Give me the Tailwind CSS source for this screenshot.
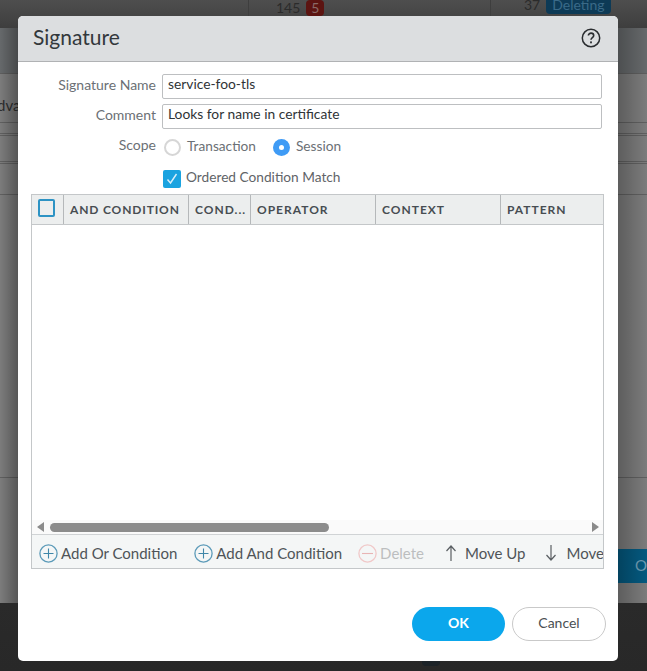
<!DOCTYPE html>
<html lang="en">
<head>
  <meta charset="UTF-8" />
  <title>Signature</title>
  <script src="https://cdn.jsdelivr.net/npm/@tailwindcss/browser@4"></script>
</head>
<body class="relative w-[647px] h-[671px] overflow-hidden bg-gradient-to-b from-[#3c3c3c] to-[#282828] font-['Lato','Open_Sans',sans-serif]">

  <!-- dimmed page behind the dialog -->
  <div class="h-[28px] bg-gradient-to-b from-[#4e4e4e] to-[#3e3e3e] flex items-start text-[14px] text-[#2b2b2b]">
    <div class="ml-[248px] w-[243px] h-[16px] border-x border-[#3e3e3e] flex justify-start pl-[27px] gap-[6px]">
      <span class="-mt-[3px]">145</span>
      <span class="h-[16px] w-[18px] bg-[#5c1411] rounded-sm text-center text-[#8a6a66] leading-[15px]">5</span>
    </div>
    <div class="ml-[33px] -mt-[6px] flex gap-[6px]">
      <span>37</span>
      <span class="h-[20px] px-[6px] bg-[#0d3a56] rounded-sm text-[#3a6a88]">Deleting</span>
    </div>
  </div>
  <div class="h-[575px] bg-[#7c7c7c] relative">
    <div class="absolute left-0 right-0 top-0 h-[45px] bg-[#66696b]"></div>
    <div class="absolute left-0 top-[66px] w-[18px] text-[15px] text-[#2e2e2e] overflow-hidden whitespace-nowrap"><span class="-ml-[3px] block">dvanced</span></div>
    <div class="absolute left-0 right-0 top-[45px] border-t border-[#5e5e5e]"></div>
    <div class="absolute left-0 right-0 top-[94px] border-t border-[#606060]"></div>
    <div class="absolute left-0 right-0 top-[105px] border-t-3 border-double border-[#606060]"></div>
    <div class="absolute left-0 right-0 top-[133px] border-t-3 border-double border-[#606060]"></div>
    <div class="absolute left-0 right-0 top-[166px] border-t border-[#606060]"></div>
    <div class="absolute left-0 right-0 top-[449px] border-t border-[#606060]"></div>
    <div class="absolute right-0 top-[521px] w-[29px] h-[34px] bg-[#04597f] text-[15px] text-[#6f9db5] pl-[17px] leading-[33px] overflow-hidden">O</div>
  </div>

  <!-- shadows either side of the dialog -->
  <div class="absolute left-0 top-[28px] w-[18px] h-[575px] bg-gradient-to-r from-black/0 to-black/30"></div>
  <div class="absolute left-[618px] top-[28px] w-[29px] h-[575px] bg-gradient-to-l from-black/0 to-black/25"></div>
  <div class="absolute left-[422px] top-[660px] w-[18px] h-[6px] bg-[#1c2328] rounded-b-sm"></div>

  <!-- dialog -->
  <div class="absolute left-[18px] top-[16px] w-[600px] h-[645px] bg-white rounded-[5px] flex flex-col">
    <div class="h-[46px] shrink-0 bg-[#dcdee0] border-b border-[#b0b2b4] rounded-t-[5px] flex items-center justify-between pl-[15px] pr-[17px]">
      <span class="text-[21px] text-[#33383c] leading-none -mt-[5px]">Signature</span>
      <svg width="20" height="20" viewBox="0 0 20 20" class="-mt-[1px]">
        <circle cx="10" cy="10" r="8.7" fill="none" stroke="#2a2d30" stroke-width="1.5"/>
        <path d="M7.4 7.6c0-1.500 1.200-2.500 2.700-2.500s2.600 1 2.600 2.300c0 2.200-2.700 2.200-2.700 4.400" fill="none" stroke="#2a2d30" stroke-width="1.600"/>
        <rect x="9.100" y="13.400" width="1.800" height="1.900" fill="#2a2d30"/>
      </svg>
    </div>

    <div class="pl-[13px] pr-[14px] flex flex-col">
      <div class="flex items-center mt-[12px] gap-[6px]">
        <label class="w-[125px] text-right text-[14px] text-[#6b7075] -mt-[5px]">Signature Name</label>
        <div class="w-[440px] h-[25px] border border-[#bdbfc1] rounded-[2px] px-[5px] text-[13.8px] leading-[18px] text-[#2f3336]">service-foo-tls</div>
      </div>
      <div class="flex items-center mt-[5px] gap-[6px]">
        <label class="w-[125px] text-right text-[14px] text-[#6b7075] -mt-[5px]">Comment</label>
        <div class="w-[440px] h-[25px] border border-[#bdbfc1] rounded-[2px] px-[5px] text-[13.8px] leading-[18px] text-[#2f3336]">Looks for name in certificate</div>
      </div>
      <div class="flex items-center mt-[5px] h-[26px] gap-[7px]">
        <label class="w-[125px] text-right text-[14px] text-[#6b7075] -mt-[5px]">Scope</label>
        <span class="ml-[1px] w-[17px] h-[17px] rounded-full border-2 border-[#d6d6d6] bg-white"></span>
        <span class="text-[13.7px] text-[#6b7075] -ml-[1px] -mt-[2px]">Transaction</span>
        <span class="ml-[10px] w-[17px] h-[17px] rounded-full bg-[#3f9bf5] flex items-center justify-center"><span class="w-[5px] h-[5px] rounded-full bg-white"></span></span>
        <span class="text-[13.7px] text-[#6b7075] -ml-[1px] -mt-[2px]">Session</span>
      </div>
      <div class="flex items-center mt-[5px] h-[26px] pl-[132px] gap-[5px]">
        <span class="w-[18px] h-[18px] rounded-[2px] bg-[#1aa3e0] flex items-center justify-center mt-[2px]">
          <svg width="14" height="14" viewBox="0 0 14 14"><path d="M2.500 7.500l3 3.500 6-9" fill="none" stroke="#d8effa" stroke-width="1.400"/></svg>
        </span>
        <span class="text-[13.7px] text-[#5f6468] -mt-[2px]">Ordered Condition Match</span>
      </div>

      <!-- conditions table -->
      <div class="mt-[3px] w-[573px] h-[375px] border border-[#c4c7c9] flex flex-col">
        <div class="h-[30px] shrink-0 bg-[#eceeee] border-b border-[#c4c7c9] flex text-[12px] font-bold tracking-[1px] text-[#474d52]">
          <div class="w-[32px] border-r border-[#b5b8ba] flex items-center justify-center pr-[2px]"><span class="w-[17px] h-[18px] border-2 border-[#2d93c4] rounded-[2px] -mt-[4px]"></span></div>
          <div class="w-[125px] border-r border-[#b5b8ba] flex items-center pl-[6px] tracking-[0.85px]">AND CONDITION</div>
          <div class="w-[62px] border-r border-[#b5b8ba] flex items-center pl-[6px]">COND...</div>
          <div class="w-[125px] border-r border-[#b5b8ba] flex items-center pl-[6px]">OPERATOR</div>
          <div class="w-[125px] border-r border-[#b5b8ba] flex items-center pl-[6px]">CONTEXT</div>
          <div class="flex-1 flex items-center pl-[6px]">PATTERN</div>
        </div>
        <div class="flex-1"></div>
        <div class="h-[15px] shrink-0 bg-[#fafafa] border-b border-[#d0d3d5] flex items-center relative">
          <span class="absolute left-[5px] top-[2px] border-y-[5px] border-y-transparent border-r-[7px] border-r-[#8a8a8a]"></span>
          <span class="absolute left-[18px] top-[3px] w-[279px] h-[9px] rounded-full bg-[#8c8c8c]"></span>
          <span class="absolute right-[4px] top-[2px] border-y-[5px] border-y-transparent border-l-[7px] border-l-[#8a8a8a]"></span>
        </div>
        <div class="h-[33px] shrink-0 bg-[#f4f6f6] flex items-center overflow-hidden whitespace-nowrap text-[15px] text-[#4f5458] pl-[7px] pt-[3px]">
          <svg width="19" height="19" viewBox="0 0 19 19" class="shrink-0"><circle cx="9.500" cy="9.500" r="8.600" fill="none" stroke="#5b9ab8" stroke-width="1.300"/><path d="M9.500 4.500v10M4.500 9.500h10" stroke="#3f86a8" stroke-width="1.100"/></svg>
          <span class="ml-[3px]">Add Or Condition</span>
          <svg width="19" height="19" viewBox="0 0 19 19" class="ml-[17px] shrink-0"><circle cx="9.500" cy="9.500" r="8.600" fill="none" stroke="#5b9ab8" stroke-width="1.300"/><path d="M9.500 4.500v10M4.500 9.500h10" stroke="#3f86a8" stroke-width="1.100"/></svg>
          <span class="ml-[3px]">Add And Condition</span>
          <svg width="19" height="19" viewBox="0 0 19 19" class="ml-[16px] shrink-0"><circle cx="9.500" cy="9.500" r="8.600" fill="none" stroke="#f0c8c8" stroke-width="1.300"/><path d="M4 9.500h11" stroke="#e8b4b4" stroke-width="1.100"/></svg>
          <span class="ml-[3px] text-[#bcbebf]">Delete</span>
          <svg width="12" height="18" viewBox="0 0 12 18" class="ml-[21px] shrink-0"><path d="M6 17V2M1.500 7L6 2l4.500 5" fill="none" stroke="#5a5f63" stroke-width="1.200"/></svg>
          <span class="ml-[8px]">Move Up</span>
          <svg width="12" height="18" viewBox="0 0 12 18" class="ml-[20px] shrink-0"><path d="M6 1v15M1.500 11L6 16l4.500-5" fill="none" stroke="#5a5f63" stroke-width="1.200"/></svg>
          <span class="ml-[9px]">Move</span>
        </div>
      </div>
    </div>

    <div class="mt-[38px] flex justify-end gap-[7px] pr-[12px]">
      <button class="w-[93px] h-[34px] rounded-full bg-[#0ba7ec] text-white text-[14px] font-bold pb-[3px]">OK</button>
      <button class="w-[94px] h-[34px] rounded-full bg-white border border-[#c9c9c9] text-[#4a4f53] text-[14px] pb-[3px]">Cancel</button>
    </div>
  </div>
</body>
</html>
